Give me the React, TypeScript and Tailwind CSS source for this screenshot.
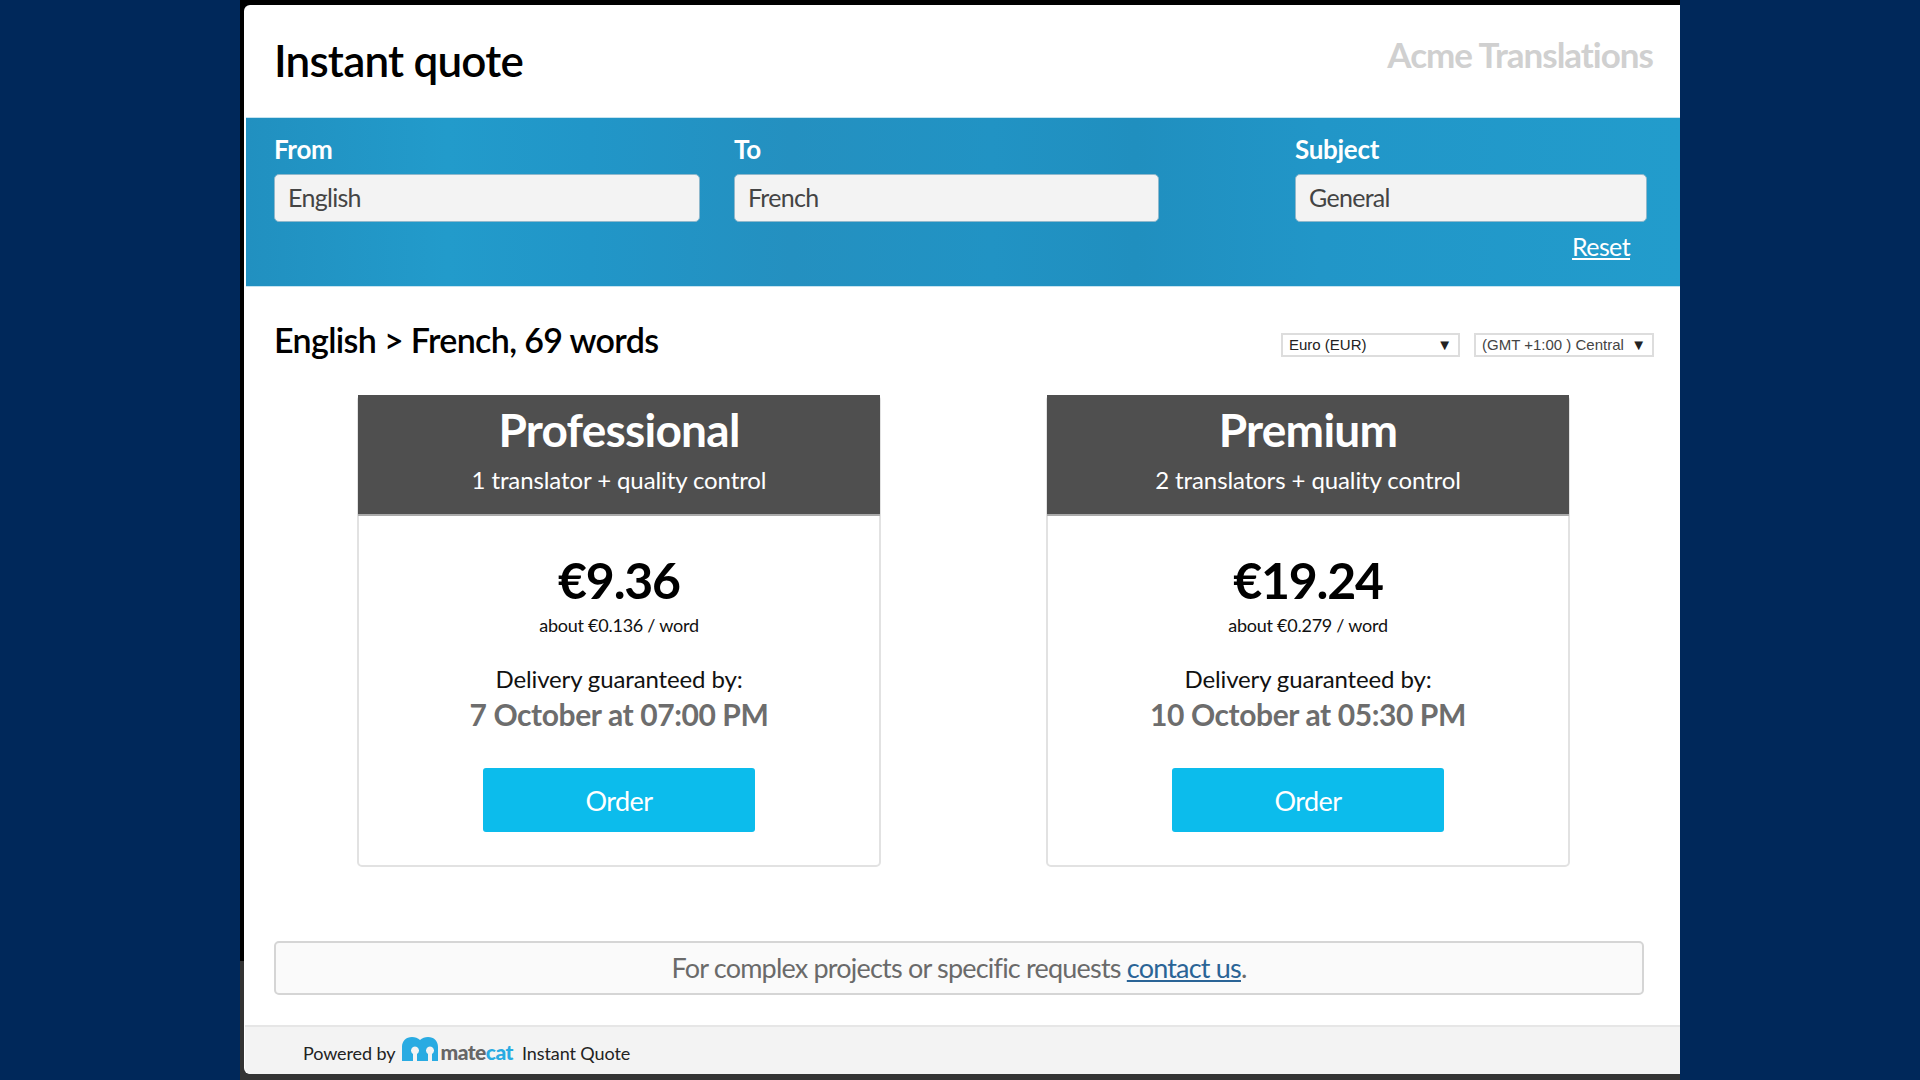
const sans = "font-['Lato','Open_Sans',sans-serif]";

const plans = [
  {
    name: 'Professional',
    desc: '1 translator + quality control',
    price: '€9.36',
    rate: 'about €0.136 / word',
    date: '7 October at 07:00 PM',
  },
  {
    name: 'Premium',
    desc: '2 translators + quality control',
    price: '€19.24',
    rate: 'about €0.279 / word',
    date: '10 October at 05:30 PM',
  },
];

function Field({ label, value, className }: { label: string; value: string; className: string }) {
  return (
    <div className={className}>
      <div className="h-[32px] text-[26px] leading-[32px] font-bold tracking-[-0.3px] text-white">{label}</div>
      <div className="mt-[9px] h-[48px] rounded-[5px] border border-[#8fb8cc] bg-[#f3f3f3] pl-[13px] text-[25px] leading-[44px] tracking-[-0.7px] text-[#444]">
        {value}
      </div>
    </div>
  );
}

function Plan({ plan }: { plan: (typeof plans)[number] }) {
  return (
    <div className="h-[472px] w-[524px] rounded-[5px] border-2 border-[#e2e2e2] text-center">
      <div className="-mx-[1px] -mt-[2px] h-[121px] border-b-2 border-[#aaa] bg-[#4f4f4f] text-white">
        <div className="pt-[7px] text-[46px] leading-[56px] font-bold tracking-[-0.75px]">{plan.name}</div>
        <div className="mt-[6px] text-[24px] leading-[32px] tracking-[-0.1px]">{plan.desc}</div>
      </div>
      <div className="pt-[33px] text-[50px] leading-[62px] font-bold tracking-[-1.2px] text-black">{plan.price}</div>
      <div className="pt-[2px] text-[18px] leading-[24px] tracking-[-0.25px] text-[#111]">{plan.rate}</div>
      <div className="mt-[25px] text-[24px] leading-[34px] tracking-[-0.13px] text-[#111]">Delivery guaranteed by:</div>
      <div className="text-[30px] leading-[36px] font-bold tracking-[-0.4px] text-[#6d6d6d]">{plan.date}</div>
      <div className="mx-auto mt-[36px] h-[64px] w-[272px] rounded-[3px] bg-[#0cbcec] text-[27px] leading-[66px] tracking-[-0.6px] text-white">
        Order
      </div>
    </div>
  );
}

function MatecatMark() {
  return (
    <svg width="36" height="24" viewBox="0 0 36 24" className="mb-[10px] shrink-0">
      <path
        fill="#29abe2"
        fillRule="evenodd"
        d="M0 24V10C0 4 4 0 10 0c3 0 6 1 8 3 2-2 5-3 8-3 6 0 10 4 10 10v14h-6v-7l1.500-1.500a4 4 0 1 0-7 0l1.500 1.500v7h-11v-7l1.500-1.500a4 4 0 1 0-7 0l1.500 1.500v7z"
      />
    </svg>
  );
}

export default function App() {
  return (
    <div className={`flex h-[1080px] w-[1920px] justify-center overflow-hidden bg-[#00285a] ${sans}`}>
      <div className="h-full w-[1440px] bg-[linear-gradient(#000_0%,#000_89%,#333_89%)] pt-[5px] pl-[4px]">
        <div className="flex h-[1069px] w-[1436px] flex-col rounded-l-[6px] bg-white">
          <div className="flex h-[112px] justify-between pr-[27px] pl-[30px]">
            <h1 className="pt-[30px] text-[44px] leading-[50px] font-semibold tracking-[-0.8px] text-black">Instant quote</h1>
            <div className="pt-[28px] text-[35px] leading-[42px] font-bold tracking-[-1px] text-[#d0d0d0]">Acme Translations</div>
          </div>

          <div className="ml-[2px] flex h-[170px] border-y border-[#c5e3f0] bg-[#2196c8] bg-[linear-gradient(90deg,#2190c0_0%,#229bcb_14%,#2196c8_24%,#2490c0_38%,#2193c4_52%,#208fbf_62%,#2196c8_75%,#229ccc_100%)] pt-[15px] pl-[28px]">
            <Field label="From" value="English" className="w-[426px]" />
            <Field label="To" value="French" className="ml-[34px] w-[425px]" />
            <div className="ml-[136px] w-[352px]">
              <Field label="Subject" value="General" className="w-full" />
              <div className="mt-[8px] pr-[17px] text-right text-[25px] leading-[33px] tracking-[-0.6px] text-white underline">Reset</div>
            </div>
          </div>

          <div className="flex h-[108px] items-start justify-between pr-[26px] pl-[30px]">
            <h2 className="pt-[32px] text-[34px] leading-[42px] font-semibold tracking-[-0.65px] text-black">English &gt; French, 69 words</h2>
            <div className="flex gap-[14px] pt-[46px] font-['Liberation_Sans',sans-serif] text-[15px] leading-[20px] text-[#222]">
              <div className="flex h-[24px] w-[179px] items-center justify-between border-2 border-[#ddd] pr-[6px] pl-[6px]">
                <span>Euro (EUR)</span>
                <span className="text-[15px]">▼</span>
              </div>
              <div className="flex h-[24px] w-[180px] items-center justify-between border-2 border-[#ddd] pr-[6px] pl-[6px]">
                <span className="whitespace-nowrap text-[#444]">(GMT +1:00 ) Central</span>
                <span className="text-[15px]">▼</span>
              </div>
            </div>
          </div>

          <div className="flex gap-[165px] pl-[113px]">
            {plans.map((p) => (
              <Plan key={p.name} plan={p} />
            ))}
          </div>

          <div className="mt-[74px] ml-[30px] h-[54px] w-[1370px] rounded-[5px] border-2 border-[#d5d5d5] bg-[#fafafa] text-center text-[27px] leading-[50px] tracking-[-0.8px] text-[#6a6a6a]">
            For complex projects or specific requests <span className="text-[#2a6496] underline">contact us</span>.
          </div>

          <div className="mt-[30px] ml-[1px] flex flex-1 items-center rounded-bl-[6px] border-t-2 border-[#e6e6e6] bg-[#f3f3f3] pt-[6px] pl-[58px] text-[18px] tracking-[-0.1px] text-[#222]">
            <span>Powered by</span>
            <span className="ml-[7px] flex items-end">
              <MatecatMark />
              <span className="mb-[8px] ml-[2px] text-[21px] leading-[22px] font-black tracking-[-0.5px] text-[#666]">
                mate<span className="text-[#29abe2]">cat</span>
              </span>
            </span>
            <span className="ml-[9px]">Instant Quote</span>
          </div>
        </div>
      </div>
    </div>
  );
}
